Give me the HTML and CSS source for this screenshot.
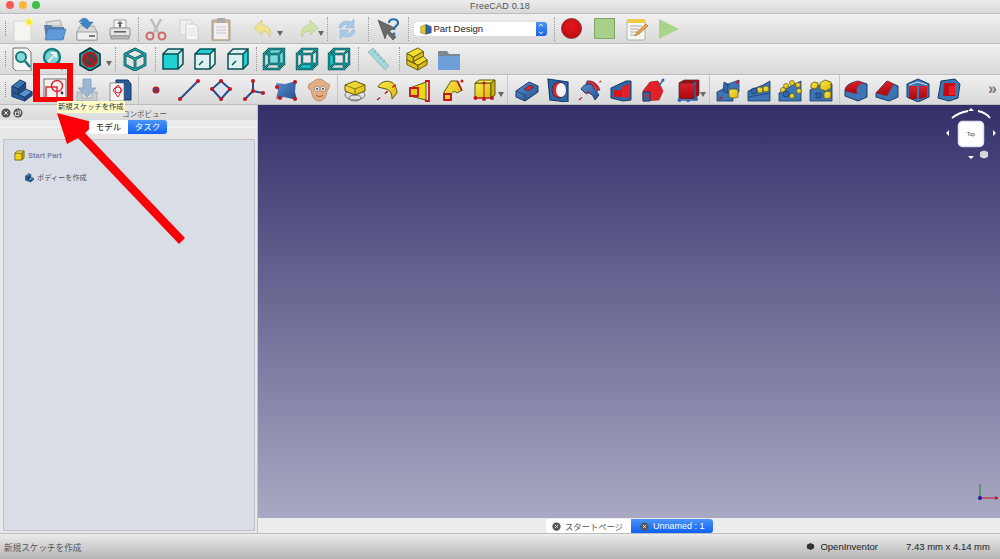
FILE: index.html
```html
<!DOCTYPE html>
<html lang="ja">
<head>
<meta charset="utf-8">
<title>FreeCAD 0.18</title>
<link rel="stylesheet" href="styles.css">
</head>
<body>
<svg class="defs" aria-hidden="true">
  <defs>
    <linearGradient id="red" x1="0" y1="0" x2="1" y2="1"><stop offset="0" stop-color="#f01a22"/><stop offset="1" stop-color="#a80810"/></linearGradient>
    <linearGradient id="yel" x1="0" y1="0" x2="1" y2="1"><stop offset="0" stop-color="#fbe94a"/><stop offset="1" stop-color="#d9b80c"/></linearGradient>
    <linearGradient id="blu" x1="0" y1="0" x2="1" y2="1"><stop offset="0" stop-color="#5b8fd0"/><stop offset="1" stop-color="#234f8c"/></linearGradient>
    <linearGradient id="vp" x1="0" y1="0" x2="0" y2="1"><stop offset="0" stop-color="#d92028"/><stop offset="1" stop-color="#a50a10"/></linearGradient>
    <path id="boxw" fill="none" d="M2 7h15v15H2zM7 2h15v15H7zM2 7l5-5M17 7l5-5M2 22l5-5M17 22l5-5"/>
    <path id="boxo" fill="none" d="M2 7h15v15H2zM2 7l5-5h15v15l-5 5M17 7l5-5"/>

    <symbol id="new" viewBox="0 0 24 24"><path d="M4 4h15l2 2v18H4z" fill="#f4f4f0" stroke="#d2d2ce" stroke-width=".8"/><circle cx="19" cy="5" r="4.500" fill="#fff176" opacity=".6"/><circle cx="19" cy="5" r="2.400" fill="#f6e92a"/></symbol>
    <symbol id="open" viewBox="0 0 24 24"><path d="M3 5l14-2 2 6H4z" fill="#ddd" stroke="#888" stroke-width=".6"/><path d="M1 8h7l2 2h11v12H3z" fill="#5b7fa6"/><path d="M5 12h18l-3 11H2z" fill="#5f9ad8" stroke="#3d6ea8" stroke-width=".6"/></symbol>
    <symbol id="save" viewBox="0 0 24 24"><path d="M2 15l3-6h14l3 6v8H2z" fill="#d8d8d8" stroke="#8a8a8a" stroke-width=".7"/><rect x="2" y="15" width="20" height="8" fill="#eee" stroke="#8a8a8a" stroke-width=".7"/><rect x="14" y="18" width="6" height="2" fill="#777"/><path d="M4 5c3-5 8-5 10 0h4l-6 7-7-6h3c-1-2-2-2-4-1z" fill="#3a86c8" stroke="#245c94" stroke-width=".5"/></symbol>
    <symbol id="print" viewBox="0 0 24 24"><path d="M6 3h12v8H6z" fill="#f4f4f4" stroke="#888" stroke-width=".7"/><path d="M9 7l3-3 3 3h-2v3h-2V7z" fill="#666"/><rect x="2" y="11" width="20" height="8" rx="1" fill="#e4e4e4" stroke="#777" stroke-width=".8"/><rect x="3" y="19" width="18" height="3" fill="#bbb" stroke="#777" stroke-width=".6"/><rect x="6" y="14" width="12" height="1.600" fill="#666"/></symbol>
    <symbol id="cut" viewBox="0 0 24 24"><path d="M7 2l8 15M17 2L9 17" stroke="#bdbdbd" stroke-width="2.400" fill="none"/><circle cx="6" cy="19" r="3.500" fill="none" stroke="#d06a6a" stroke-width="2"/><circle cx="18" cy="19" r="3.500" fill="none" stroke="#d06a6a" stroke-width="2"/></symbol>
    <symbol id="copy" viewBox="0 0 24 24"><path d="M3 3h12v15H3z" fill="#efefef" stroke="#d0d0d0"/><path d="M9 7h9l3 3v13H9z" fill="#f6f6f6" stroke="#ccc"/><path d="M11 12h8M11 15h8M11 18h8" stroke="#ddd"/></symbol>
    <symbol id="paste" viewBox="0 0 24 24"><rect x="3" y="3" width="18" height="21" rx="1" fill="#c9b596" stroke="#a4a096"/><rect x="5" y="6" width="14" height="16" fill="#efefef"/><rect x="8" y="1" width="8" height="5" rx="1" fill="#aaa"/><path d="M7 10h10M7 13h10M7 16h10" stroke="#c8c8c8"/></symbol>
    <symbol id="undo" viewBox="0 0 24 24"><path d="M10 3L2 11l8 7v-4c4 0 6 1 8 6 2-7-1-11-8-12z" fill="#f1e390" stroke="#cfc37c" stroke-width=".7"/></symbol>
    <symbol id="redo" viewBox="0 0 24 24"><path d="M14 3l8 8-8 7v-4c-4 0-6 1-8 6-2-7 1-11 8-12z" fill="#cfe3a8" stroke="#b4c98f" stroke-width=".7"/></symbol>
    <symbol id="refresh" viewBox="0 0 24 24"><path d="M4 11c0-5 6-9 12-6l3-3v9h-9l3-3c-3-1-5 0-6 3z" fill="#a9c8e6" stroke="#8db0d2" stroke-width=".5"/><path d="M20 13c0 5-6 9-12 6l-3 3v-9h9l-3 3c3 1 5 0 6-3z" fill="#a9c8e6" stroke="#8db0d2" stroke-width=".5"/></symbol>
    <symbol id="help" viewBox="0 0 24 24"><path d="M2 3l7 19 2-6 6 7 3-3-7-6 6-3z" fill="#6a6a6a" stroke="#333" stroke-width=".5"/><path d="M13 6c0-5 9-5 9 0 0 3-4 3-4 7" fill="none" stroke="#2d6aa8" stroke-width="2.200"/><circle cx="18" cy="17" r="1.400" fill="#2d6aa8"/></symbol>
    <symbol id="macro" viewBox="0 0 24 24"><rect x="2" y="3" width="18" height="20" rx="1" fill="#f6f6f0" stroke="#999" stroke-width=".7"/><rect x="2" y="2" width="18" height="4" fill="#eec94a"/><path d="M5 9h12M5 12h9M5 15h7M5 18h6" stroke="#aaa"/><path d="M10 19l2-4 9-8 2 2-9 8z" fill="#e8a23c" stroke="#8a5a1e" stroke-width=".5"/></symbol>

    <symbol id="fit" viewBox="0 0 24 24"><path d="M3 1h14l4 4v19H6l-3-3z" fill="#f4f4f4" stroke="#555" stroke-width=".8"/><circle cx="11" cy="10" r="5" fill="#8fd8d8" stroke="#107c80" stroke-width="2"/><path d="M15 14l5 6" stroke="#107c80" stroke-width="2.600"/></symbol>
    <symbol id="fitsel" viewBox="0 0 24 24"><circle cx="11" cy="10" r="8" fill="#7fd0d4" stroke="#107c80" stroke-width="2.400"/><path d="M17 16l5 6" stroke="#107c80" stroke-width="3"/><path d="M7 15l8-9M10 6h5v5" stroke="#f0f0f0" stroke-width="1.800" fill="none"/></symbol>
    <symbol id="nodraw" viewBox="0 0 24 24"><path d="M12 1l10 6v11l-10 6-10-6V7z" fill="#17a7a8" stroke="#07393c" stroke-width="1.600"/><circle cx="12" cy="12.500" r="7" fill="#444" stroke="#c5131c" stroke-width="2.200"/><path d="M7 8l10 9" stroke="#c5131c" stroke-width="2.200"/></symbol>
    <symbol id="cube0" viewBox="0 0 24 24"><path id="iso" fill="none" stroke="#0a4f52" stroke-width="2.800" d="M12 2l10 5v11l-10 5-10-5V7zM2 7l10 5 10-5M12 12v11"/><path fill="none" stroke="#20b8ba" stroke-width="1.100" d="M12 2l10 5v11l-10 5-10-5V7zM2 7l10 5 10-5M12 12v11"/></symbol>
    <symbol id="cubeF" viewBox="0 0 24 24"><path d="M2 7h15v15H2z" fill="#1dd0d2"/><path d="M2 7l5-5h15l-5 5zM17 7l5-5v15l-5 5z" fill="#bfe8e8"/><use href="#boxo" stroke="#0a4f52" stroke-width="1.500"/></symbol>
    <symbol id="cubeT" viewBox="0 0 24 24"><path d="M2 7l5-5h15l-5 5z" fill="#1dd0d2"/><path d="M2 7h15v15H2zM17 7l5-5v15l-5 5z" fill="#dcf0f0"/><use href="#boxo" stroke="#0a4f52" stroke-width="1.500"/><path d="M6 18l4-4" stroke="#0a4f52" stroke-width="1.500"/></symbol>
    <symbol id="cubeR" viewBox="0 0 24 24"><path d="M17 7l5-5v15l-5 5z" fill="#1dd0d2"/><path d="M2 7h15v15H2zM2 7l5-5h15l-5 5z" fill="#dcf0f0"/><use href="#boxo" stroke="#0a4f52" stroke-width="1.500"/><path d="M6 18l4-4" stroke="#0a4f52" stroke-width="1.500"/></symbol>
    <symbol id="cubeB" viewBox="0 0 24 24"><path d="M7 2h15v15H7z" fill="#7cdcdc"/><use href="#boxw" stroke="#0a4f52" stroke-width="2.400"/><use href="#boxw" stroke="#20b8ba" stroke-width=".9"/></symbol>
    <symbol id="cubeD" viewBox="0 0 24 24"><path d="M2 22l5-5h15l-5 5z" fill="#1dd0d2"/><use href="#boxw" stroke="#0a4f52" stroke-width="2.400"/><use href="#boxw" stroke="#20b8ba" stroke-width=".9"/></symbol>
    <symbol id="cubeL" viewBox="0 0 24 24"><path d="M2 7l5-5v15l-5 5z" fill="#1dd0d2"/><use href="#boxw" stroke="#0a4f52" stroke-width="2.400"/><use href="#boxw" stroke="#20b8ba" stroke-width=".9"/></symbol>
    <symbol id="ruler" viewBox="0 0 24 24"><path d="M7 1l16 18-4 4L2 5z" fill="#a3d8da" stroke="#7fb0b4" stroke-width=".7"/><path d="M8 6l2-2M11 9l2-2M14 12l2-2M17 15l2-2" stroke="#6c9ea4"/></symbol>
    <symbol id="part" viewBox="0 0 24 26"><g fill="#f4dc2a" stroke="#5c5210" stroke-width="1" stroke-linejoin="round"><path d="M1 7l12-6 6 4-11 6z"/><path d="M1 7l7 4v6l-7-3z" fill="#e0c41a"/><path d="M8 11l11-6v5L8 16z" fill="#d8bb14"/><path d="M8 16l11-6 4 4-10 6z"/><path d="M1 14l12 6v5L1 19z" fill="#e0c41a"/><path d="M13 20l10-6v5l-10 6z" fill="#d8bb14"/></g></symbol>
    <symbol id="ycube" viewBox="0 0 24 24"><path d="M2 7l6-5h14l-5 5z" fill="#fbe94a"/><path d="M2 7h15v15H2z" fill="#eed21c"/><path d="M17 7l5-5v15l-5 5z" fill="#c6a80e"/><use href="#boxo" stroke="#5c5210" stroke-width="1.600"/></symbol>
    <symbol id="folder" viewBox="0 0 24 24"><path d="M1 4h9l2 3h11v16H1z" fill="#7f8790"/><path d="M1 9h22v14H1z" fill="#6f9fd8"/></symbol>

    <symbol id="body" viewBox="0 0 24 26"><g fill="#3d74b4" stroke="#173a66" stroke-width="1" stroke-linejoin="round"><path d="M1 9l9-7 6 3-8 7z"/><path d="M1 9l7 3v6l-7-3z" fill="#2a5a98"/><path d="M8 12l8-7v7l-8 6z" fill="#1f4a84"/><path d="M8 18l8-6 7 3-8 6z" fill="#5b8fd0"/><path d="M1 15l14 6v4L1 20z" fill="#2a5a98"/><path d="M15 21l8-6v4l-8 6z" fill="#1f4a84"/></g></symbol>
    <symbol id="sketch" viewBox="0 0 24 24"><rect x="1" y="1" width="22" height="22" fill="#f2f2f2" stroke="#555" stroke-width=".8"/><rect x="3" y="9" width="11" height="13" fill="none" stroke="#e2202a" stroke-width="1.400"/><circle cx="14" cy="8" r="5.500" fill="none" stroke="#e2202a" stroke-width="1.400"/><circle cx="19" cy="15" r="1.400" fill="#333"/></symbol>
    <symbol id="import" viewBox="0 0 24 24"><path d="M2 14h5v6h10v-6h5v9H2z" fill="#c9ccd2" stroke="#9aa0a8" stroke-width=".7"/><path d="M8 1h8v9h5l-9 9-9-9h5z" fill="#9cb5d4" stroke="#7c98bc" stroke-width=".7"/></symbol>
    <symbol id="clone" viewBox="0 0 24 24"><path d="M8 2h12l3 4v16H8z" fill="#2a5a98" stroke="#173a66"/><path d="M2 5h14v18H2z" fill="#f4f4f4" stroke="#555" stroke-width=".6"/><path d="M5 12l5-5 4 5-4 7z" fill="none" stroke="#e2202a"/><circle cx="10" cy="12" r="3" fill="none" stroke="#e2202a"/></symbol>
    <symbol id="point" viewBox="0 0 24 24"><circle cx="12" cy="12" r="3.500" fill="#c8141c"/><circle cx="12" cy="12" r="2" fill="#2a4f9e" opacity=".8"/></symbol>
    <symbol id="line" viewBox="0 0 24 24"><path d="M3 21L21 3" stroke="#234f8c" stroke-width="2"/><circle cx="3" cy="21" r="2" fill="#c8141c"/><circle cx="21" cy="3" r="2" fill="#c8141c"/></symbol>
    <symbol id="plane" viewBox="0 0 24 24"><path d="M12 3l9 8-9 10-9-10z" fill="#dde4ee" stroke="#234f8c" stroke-width="2"/><g fill="#c8141c"><circle cx="12" cy="3" r="2"/><circle cx="21" cy="11" r="2"/><circle cx="12" cy="21" r="2"/><circle cx="3" cy="11" r="2"/></g></symbol>
    <symbol id="lcs" viewBox="0 0 24 24"><path d="M11 13V3M11 13l10 2M11 13L3 21" stroke="#234f8c" stroke-width="2"/><g fill="#c8141c"><circle cx="11" cy="3" r="2"/><circle cx="21" cy="15" r="2"/><circle cx="3" cy="21" r="2"/><circle cx="11" cy="13" r="2"/></g></symbol>
    <symbol id="shape" viewBox="0 0 24 24"><path d="M2 5l9 1 11-3-1 11 2 8-13-3-8 2 2-8z" fill="url(#blu)"/><g fill="#c8141c"><circle cx="3" cy="9" r="2"/><circle cx="21" cy="4" r="2"/><circle cx="21" cy="21" r="2"/><circle cx="6" cy="20" r="2"/></g></symbol>
    <symbol id="sheep" viewBox="0 0 24 24"><path d="M6 4c3-4 9-4 12 0l5 3-2 5-1 0c0 6-3 11-8 11S5 18 4 12L1 10l1-4z" fill="#e3ad84" stroke="#b07d58" stroke-width=".7"/><circle cx="10" cy="11" r="2.500" fill="#fff" stroke="#555" stroke-width=".5"/><circle cx="16" cy="11" r="2.500" fill="#fff" stroke="#555" stroke-width=".5"/><circle cx="10" cy="11" r="1" fill="#333"/><circle cx="16" cy="11" r="1" fill="#333"/><path d="M9 17c2 2 5 2 7 0" stroke="#8a5a38" fill="none"/></symbol>

    <symbol id="pad" viewBox="0 0 24 24"><ellipse cx="12" cy="17" rx="10" ry="5" fill="none" stroke="#777"/><ellipse cx="12" cy="20" rx="6" ry="3" fill="none" stroke="#777"/><path d="M2 7l10-4 10 4v6l-10 4-10-4z" fill="url(#yel)" stroke="#5e5410"/><path d="M2 7l10 4 10-4M12 11v6" fill="none" stroke="#5e5410" stroke-width=".7"/></symbol>
    <symbol id="rev" viewBox="0 0 24 24"><path d="M2 9c2-5 9-7 13-5 3 1 6 6 6 11l-5 6c0-6-2-9-6-10-3-1-5-1-8-2z" fill="url(#yel)" stroke="#5e5410"/><path d="M1 22L23 4" stroke="#c8141c" stroke-width="1.400" stroke-dasharray="4 6"/></symbol>
    <symbol id="loft" viewBox="0 0 24 24"><path d="M2 10l16-6v18l-16-4z" fill="#f0d818" stroke="#5e5410"/><path d="M2 10h8v8H2z" fill="#e8c818" stroke="#c8141c" stroke-width="1.800"/><path d="M17 3h4v20h-4" fill="none" stroke="#c8141c" stroke-width="1.800"/></symbol>
    <symbol id="sweep" viewBox="0 0 24 24"><path d="M3 14l7-11h7l4 9-5 3c-2-2-4-2-6 1v6H3z" fill="url(#yel)" stroke="#5e5410"/><path d="M3 16h7v6H3z" fill="none" stroke="#c8141c" stroke-width="1.800"/><path d="M16 3l5 10" stroke="#c8141c" stroke-width="1.500"/><circle cx="21" cy="3" r="1.500" fill="#c8141c"/></symbol>
    <symbol id="prim" viewBox="0 0 24 24"><path d="M2 5h16v15H2z" fill="url(#yel)" stroke="#5e5410"/><path d="M2 5l4-3h16l-4 3z" fill="#fbe94a" stroke="#5e5410"/><path d="M18 5l4-3v15l-4 3z" fill="#cdb016" stroke="#5e5410"/><path d="M11 5v15M2 20h16" stroke="#c8141c"/><g fill="#c8141c"><circle cx="2.500" cy="20" r="2"/><circle cx="11" cy="21" r="2"/><circle cx="19" cy="20" r="2"/><circle cx="11" cy="5" r="1.500"/></g></symbol>

    <symbol id="pocket" viewBox="0 0 24 24"><path d="M1 13l13-9 9 4v6l-13 9-9-4z" fill="url(#blu)" stroke="#173a66"/><path d="M9 11l6-4 4 2-6 4z" fill="#e2202a" stroke="#173a66" stroke-width=".7"/><path d="M1 13l9 4v6" fill="none" stroke="#173a66" stroke-width=".8"/></symbol>
    <symbol id="hole" viewBox="0 0 24 24"><path d="M2 1l20 3v20L4 22z" fill="#2f66a8" stroke="#173a66" stroke-width="1.200"/><ellipse cx="13" cy="12" rx="7" ry="8" fill="#e2202a" stroke="#173a66"/><ellipse cx="15" cy="12" rx="5" ry="7" fill="#f4f4f4"/></symbol>
    <symbol id="groove" viewBox="0 0 24 24"><path d="M3 11c3-5 8-6 11-4l7 10-4 5c-2-5-5-8-10-7z" fill="url(#blu)" stroke="#173a66"/><path d="M8 6c5-2 9 2 11 7l3-1c-2-6-7-10-13-9z" fill="#e2202a" stroke="#173a66" stroke-width=".6"/><path d="M1 22L23 3" stroke="#c8141c" stroke-width="1.200" stroke-dasharray="4 5"/></symbol>
    <symbol id="sloft" viewBox="0 0 24 24"><path d="M2 10l15-7h5v19l-8 1-12-3z" fill="#2f66a8" stroke="#173a66"/><path d="M5 12h8v7H5z" fill="#d5141c"/><path d="M13 9l8-4v15l-8-1z" fill="#e2202a"/></symbol>
    <symbol id="ssweep" viewBox="0 0 24 24"><path d="M2 13l7-9 8-1 5 10-4 9-16 1z" fill="#e2202a" stroke="#8a0c12" stroke-width=".6"/><path d="M2 14h7v9H2z" fill="#2f66a8" stroke="#173a66"/><rect x="4" y="16" width="3" height="4" fill="#e2202a"/><path d="M18 8l4-6" stroke="#2f66a8" stroke-width="1.400"/><circle cx="22" cy="2" r="1.500" fill="#2f66a8"/></symbol>
    <symbol id="sprim" viewBox="0 0 24 24"><path d="M2 5l5-3h15v15l-4 3z" fill="#a80810" stroke="#333" stroke-width=".7"/><rect x="2" y="5" width="16" height="16" fill="url(#vp)" stroke="#333" stroke-width=".7"/><path d="M18 4v17M2 22h16" stroke="#2f66a8" stroke-width="1.400"/><g fill="#2f66a8"><circle cx="2.500" cy="22" r="2"/><circle cx="11" cy="23" r="1.500"/><circle cx="19" cy="21" r="2"/><circle cx="18" cy="5" r="1.500"/></g></symbol>

    <symbol id="mirror" viewBox="0 0 24 24"><path d="M1 14l6-3 10 4v8L1 23z" fill="#3d74b4" stroke="#173a66" stroke-width=".8"/><path d="M8 4l4 2v9l-5-2z" fill="#2f66a8" stroke="#173a66" stroke-width=".7"/><path d="M12 6l11-4v12l-9 3z" fill="#3d74b4" stroke="#173a66" stroke-width=".7"/><path d="M13 12a6 3 0 0 1 9 0v7a6 3 0 0 1-9 0z" fill="url(#yel)" stroke="#5e5410" stroke-width=".7"/><path d="M3 21l3-2M20 5l3-2" stroke="#c8141c" stroke-width="1.600"/></symbol>
    <symbol id="linear" viewBox="0 0 24 24"><path d="M1 13l15-6 7-4v20H1z" fill="#3d74b4" stroke="#173a66" stroke-width=".8"/><path d="M1 19l22-4" stroke="#173a66" stroke-width=".7"/><g fill="url(#yel)" stroke="#5e5410" stroke-width=".7"><circle cx="13" cy="12" r="3"/><circle cx="19" cy="11" r="3"/></g><circle cx="7" cy="13" r="3" fill="#2f66a8" stroke="#173a66" stroke-width=".7"/></symbol>
    <symbol id="polar" viewBox="0 0 24 24"><path d="M1 15l14-8 8-4v20H1z" fill="#3d74b4" stroke="#173a66" stroke-width=".8"/><g fill="url(#yel)" stroke="#5e5410" stroke-width=".7"><circle cx="8" cy="8" r="2.500"/><circle cx="14" cy="5" r="2.500"/><circle cx="20" cy="7" r="2.500"/><circle cx="21" cy="13" r="2.500"/><circle cx="14" cy="18" r="2.500"/><circle cx="5" cy="12" r="2.500"/></g><circle cx="8" cy="16" r="3" fill="#2f66a8" stroke="#173a66" stroke-width=".7"/></symbol>
    <symbol id="multi" viewBox="0 0 24 24"><path d="M1 12l12-6 10 0v17H1z" fill="#3d74b4" stroke="#173a66" stroke-width=".8"/><g fill="url(#yel)" stroke="#5e5410" stroke-width=".8"><path d="M11 5l5-3 6 2v6l-5 3-6-2z"/><path d="M2 6l3-2 4 1v4l-3 2-4-1z"/><path d="M15 15l3-2 4 1v5l-3 2-4-1z"/></g><rect x="7" y="15" width="5" height="5" fill="#2f66a8" stroke="#173a66" stroke-width=".7"/></symbol>
    <symbol id="fillet" viewBox="0 0 24 24"><path d="M1 12c1-5 5-7 13-9l9 3v13l-9 4-13-5z" fill="#3d74b4" stroke="#173a66"/><path d="M1 13c1-5 4-8 13-10l6 2c-7 2-8 6-7 11z" fill="url(#vp)"/></symbol>
    <symbol id="chamfer" viewBox="0 0 24 24"><path d="M1 15L12 3l11 5v11l-9 4-13-4z" fill="#3d74b4" stroke="#173a66"/><path d="M1 15L12 3l7 3-7 12z" fill="url(#vp)"/></symbol>
    <symbol id="draft" viewBox="0 0 24 24"><path d="M12 1l11 5v13l-11 5-11-5V6z" fill="#3d74b4" stroke="#173a66"/><path d="M3 8h8v13H3zM13 8h8v11l-8 2z" fill="url(#vp)"/><path d="M3 7l9-3 9 3" fill="none" stroke="#cfe0f2"/></symbol>
    <symbol id="thick" viewBox="0 0 24 24"><path d="M4 3l14-2 5 5-2 14-9 3-11-3z" fill="#3d74b4" stroke="#173a66"/><path d="M7 5h11v13H6z" fill="#c00c14"/><path d="M12 8h6v9h-6z" fill="#ee1c24"/></symbol>

    <symbol id="pd" viewBox="0 0 16 16"><path d="M1 5l7-3v13l-7-2z" fill="#e8c818" stroke="#5e5410" stroke-width=".6"/><path d="M8 2l7 3v8l-7 2z" fill="#2f66a8" stroke="#173a66" stroke-width=".6"/></symbol>
    <symbol id="cx" viewBox="0 0 12 12"><circle cx="6" cy="6" r="5.500" fill="#555"/><path d="M3.800 3.800l4.400 4.400M8.200 3.800L3.800 8.200" stroke="#eee" stroke-width="1.200"/></symbol>
    <symbol id="cf" viewBox="0 0 12 12"><circle cx="6" cy="6" r="5.500" fill="#555"/><rect x="3" y="5" width="4" height="4" fill="none" stroke="#eee"/><path d="M5 3.500h4v4" fill="none" stroke="#eee"/></symbol>
  </defs>
</svg>

<header class="titlebar">
  <div class="lights"><span class="light red"></span><span class="light amber"></span><span class="light green"></span></div>
  <div class="title">FreeCAD 0.18</div>
</header>

<section class="row row1">
  <span class="handle"></span>
  <span class="b"><svg class="ic"><use href="#new"/></svg></span>
  <span class="b"><svg class="ic"><use href="#open"/></svg></span>
  <span class="b"><svg class="ic"><use href="#save"/></svg></span>
  <span class="b"><svg class="ic"><use href="#print"/></svg></span>
  <span class="sep"></span>
  <span class="b"><svg class="ic"><use href="#cut"/></svg></span>
  <span class="b"><svg class="ic"><use href="#copy"/></svg></span>
  <span class="b"><svg class="ic"><use href="#paste"/></svg></span>
  <span class="b drop undo-cell"><svg class="ic"><use href="#undo"/></svg><i class="caret"></i></span>
  <span class="b drop redo-cell"><svg class="ic"><use href="#redo"/></svg><i class="caret"></i></span>
  <span class="sep"></span>
  <span class="b wide38"><svg class="ic"><use href="#refresh"/></svg></span>
  <span class="sep"></span>
  <span class="b wide36"><svg class="ic"><use href="#help"/></svg></span>
  <span class="sep"></span>
  <div class="combo"><svg class="combo-ic"><use href="#pd"/></svg><span class="combo-t">Part Design</span><span class="combo-btn"><i class="up"></i><i class="down"></i></span></div>
  <span class="sep sep-combo"></span>
  <span class="b"><span class="rec"></span></span>
  <span class="b"><span class="stop"></span></span>
  <span class="b"><svg class="ic"><use href="#macro"/></svg></span>
  <span class="b"><span class="play"></span></span>
</section>

<section class="row row2">
  <span class="handle"></span>
  <span class="b"><svg class="ic"><use href="#fit"/></svg></span>
  <span class="b narrow"><svg class="ic"><use href="#fitsel"/></svg></span>
  <span class="b drop draw-cell"><svg class="ic"><use href="#nodraw"/></svg><i class="caret"></i></span>
  <span class="sep"></span>
  <span class="b wide36"><svg class="ic"><use href="#cube0"/></svg></span>
  <span class="sep"></span>
  <span class="b"><svg class="ic"><use href="#cubeF"/></svg></span>
  <span class="b"><svg class="ic"><use href="#cubeT"/></svg></span>
  <span class="b"><svg class="ic"><use href="#cubeR"/></svg></span>
  <span class="sep"></span>
  <span class="b"><svg class="ic"><use href="#cubeB"/></svg></span>
  <span class="b"><svg class="ic"><use href="#cubeD"/></svg></span>
  <span class="b"><svg class="ic"><use href="#cubeL"/></svg></span>
  <span class="sep"></span>
  <span class="b wide38"><svg class="ic"><use href="#ruler"/></svg></span>
  <span class="sep"></span>
  <span class="b"><svg class="ic"><use href="#part"/></svg></span>
  <span class="b tight2"><svg class="ic"><use href="#folder"/></svg></span>
</section>

<section class="row row3">
  <span class="handle"></span>
  <span class="b"><svg class="ic"><use href="#body"/></svg></span>
  <span class="b"><svg class="ic"><use href="#sketch"/></svg></span>
  <span class="b"><svg class="ic"><use href="#import"/></svg></span>
  <span class="b"><svg class="ic"><use href="#clone"/></svg></span>
  <span class="sep"></span>
  <span class="b"><svg class="ic"><use href="#point"/></svg></span>
  <span class="b"><svg class="ic"><use href="#line"/></svg></span>
  <span class="b"><svg class="ic"><use href="#plane"/></svg></span>
  <span class="b"><svg class="ic"><use href="#lcs"/></svg></span>
  <span class="b"><svg class="ic"><use href="#shape"/></svg></span>
  <span class="b"><svg class="ic"><use href="#sheep"/></svg></span>
  <span class="sep"></span>
  <span class="b"><svg class="ic"><use href="#pad"/></svg></span>
  <span class="b"><svg class="ic"><use href="#rev"/></svg></span>
  <span class="b"><svg class="ic"><use href="#loft"/></svg></span>
  <span class="b"><svg class="ic"><use href="#sweep"/></svg></span>
  <span class="b drop prim-cell"><svg class="ic"><use href="#prim"/></svg><i class="caret"></i></span>
  <span class="sep"></span>
  <span class="b tight lead"><svg class="ic"><use href="#pocket"/></svg></span>
  <span class="b tight"><svg class="ic"><use href="#hole"/></svg></span>
  <span class="b tight"><svg class="ic"><use href="#groove"/></svg></span>
  <span class="b tight"><svg class="ic"><use href="#sloft"/></svg></span>
  <span class="b tight"><svg class="ic"><use href="#ssweep"/></svg></span>
  <span class="b drop sprim-cell"><svg class="ic"><use href="#sprim"/></svg><i class="caret"></i></span>
  <span class="sep"></span>
  <span class="b tight2 lead"><svg class="ic"><use href="#mirror"/></svg></span>
  <span class="b tight2"><svg class="ic"><use href="#linear"/></svg></span>
  <span class="b tight2"><svg class="ic"><use href="#polar"/></svg></span>
  <span class="b tight2"><svg class="ic"><use href="#multi"/></svg></span>
  <span class="sep"></span>
  <span class="b tight2"><svg class="ic"><use href="#fillet"/></svg></span>
  <span class="b tight2"><svg class="ic"><use href="#chamfer"/></svg></span>
  <span class="b tight2"><svg class="ic"><use href="#draft"/></svg></span>
  <span class="b tight2"><svg class="ic"><use href="#thick"/></svg></span>
  <span class="more">»</span>
</section>

<main class="main">
  <aside class="panel">
    <div class="panel-head">
      <svg class="pbtn"><use href="#cx"/></svg>
      <svg class="pbtn"><use href="#cf"/></svg>
      <span class="panel-title">コンポビュー</span>
    </div>
    <div class="seg"><span class="seg-a">モデル</span><span class="seg-b">タスク</span></div>
    <div class="frame">
      <div class="pane">
        <div class="task-head"><svg class="task-ic"><use href="#ycube"/></svg><span>Start Part</span></div>
        <div class="task-item"><svg class="task-ic2"><use href="#body"/></svg><span>ボディーを作成</span></div>
      </div>
    </div>
  </aside>
  <div class="view">
    <div class="viewport">
      <svg class="navcube" viewBox="0 0 60 62">
        <path d="M12 13C17 9 22 7 28 6M38 6c5 1 9 3 12 7" fill="none" stroke="#fff" stroke-width="1.800"/>
        <path d="M31 3l3 3h-6zM6 28l3-3v6zM56 28l-3-3v6zM31 54l-3-3h6z" fill="#fff"/>
        <rect x="18.500" y="16.500" width="25" height="25" rx="4" fill="#fff" stroke="#dfe2f0" stroke-width="1.500"/>
        <text x="31" y="31" class="navtxt" text-anchor="middle">Top</text>
        <path d="M40 47l4-1.500 4 1.500v5l-4 1.500-4-1.500z" fill="#d8d8d8"/>
      </svg>
      <svg class="axes" viewBox="0 0 24 20">
        <path d="M4 16V2" stroke="#1c8a2a"/>
        <path d="M4 16h15" stroke="#c8141c"/>
        <path d="M19 14l4 2-4 2z" fill="#c8141c"/>
        <circle cx="4" cy="16" r="2" fill="#1c1c9a"/>
      </svg>
    </div>
    <div class="doc-tabs">
      <span class="dt dt-a"><svg class="dt-x"><use href="#cx"/></svg>スタートページ</span>
      <span class="dt dt-b"><svg class="dt-x"><use href="#cx"/></svg>Unnamed : 1</span>
    </div>
  </div>
</main>

<footer class="status">
  <span class="status-l">新規スケッチを作成</span>
  <span class="status-nav"><svg class="status-ic" viewBox="0 0 10 10"><path d="M5 1l4 2v4L5 9 1 7V3z" fill="#333"/></svg>OpenInventor</span>
  <span class="status-size">7.43 mm x 4.14 mm</span>
</footer>

<div class="callout"></div>
<div class="tooltip">新規スケッチを作成</div>
<svg class="arrow" viewBox="0 0 200 150">
  <path d="M57 13L96 23 85 33 185 138 179 144 78 38 67 44z" fill="#fb0006"/>
</svg>
</body>
</html>
```
FILE: styles.css
```css
* { box-sizing: border-box; }
html, body { margin: 0; padding: 0; height: 559px; width: 1000px; overflow: hidden; }
body {
  position: relative;
  display: flex;
  flex-direction: column;
  font-family: "Liberation Sans", "Noto Sans CJK JP", sans-serif;
  background: #ececec;
  color: #222;
}
.defs { position: absolute; width: 0; height: 0; }

.titlebar { height: 13px; flex: none; display: flex; align-items: center; justify-content: center; position: relative; background: linear-gradient(#ececec, #d8d8d8); }
.lights { position: absolute; left: 6px; top: 1px; display: flex; gap: 5px; }
.light { width: 8px; height: 8px; border-radius: 50%; }
.red { background: #f25c55; }
.amber { background: #f6b73c; }
.green { background: #3dc04a; }
.title { font-size: 9px; color: #555; letter-spacing: .2px; margin-top: -1px; }

.row { flex: none; display: flex; align-items: center; padding-left: 6px; position: relative; background: linear-gradient(#f0f0f0, #d9d9d9); border-top: 1px solid #bdbdbd; }
.row1 { height: 30px; }
.row2 { height: 31px; }
.row3 { height: 31px; border-bottom: 1px solid #bdbdbd; }
.handle { position: absolute; left: 5px; top: 7px; bottom: 7px; border-left: 1px dotted #8c8c8c; }

.b { flex: none; width: 32.5px; height: 26px; display: flex; align-items: center; justify-content: center; position: relative; }
.ic { width: 24px; height: 24px; display: block; overflow: visible; }
.narrow { width: 28px; }
.wide38 { width: 37px; }
.wide36 { width: 36px; }
.tight { width: 31.5px; }
.tight2 { width: 31px; }
.lead { margin-left: 2px; }
.drop { justify-content: flex-start; }
.undo-cell { width: 46px; padding-left: 14px; }
.redo-cell { width: 41px; padding-left: 12px; }
.draw-cell { width: 46px; padding-left: 11px; }
.prim-cell { width: 36px; padding-left: 4px; }
.sprim-cell { width: 38px; padding-left: 8px; }
.caret { position: absolute; right: 1px; top: 15px; border-left: 3.500px solid transparent; border-right: 3.500px solid transparent; border-top: 5px solid #666; }
.sep { flex: none; width: 1px; height: 24px; margin: 0 1px 0 2px; border-left: 1px dotted #999; }
.row3 .sep { height: 29px; border-left: 1px solid #c6c6c6; }
.sep-combo { margin-left: 7px; }

.combo { flex: none; width: 133px; height: 14px; margin-left: 4px; display: flex; align-items: center; background: #fff; border-radius: 3px; overflow: hidden; box-shadow: 0 0 1px #aaa; }
.combo-ic { width: 12px; height: 12px; margin: 0 2px 0 6px; }
.combo-t { font-size: 9.500px; color: #222; flex: 1; }
.combo-btn { width: 11px; height: 100%; background: linear-gradient(#4a94f5, #1a62e0); display: flex; flex-direction: column; align-items: center; justify-content: center; gap: 2px; }
.up, .down { display: block; width: 4px; height: 4px; border: 1px solid #fff; transform: rotate(45deg) scale(.8); }
.up { border-right: none; border-bottom: none; }
.down { border-left: none; border-top: none; }

.rec { width: 21px; height: 21px; border-radius: 50%; background: radial-gradient(circle at 50% 35%, #e8161e, #b00a10); border: 1px solid #8d2a2a; }
.stop { width: 21px; height: 21px; background: #a8d088; border: 1px solid #80a46a; }
.play { width: 0; height: 0; border-left: 20px solid #a9d48a; border-top: 10.500px solid transparent; border-bottom: 10.500px solid transparent; }

.more { position: absolute; right: 3px; top: 5px; font-size: 16px; line-height: 18px; color: #777; font-weight: bold; }

.main { flex: 1; min-height: 0; display: flex; }
.panel { width: 258px; flex: none; display: flex; flex-direction: column; background: #ececec; border-right: 1px solid #c4c4c4; }
.panel-head { height: 15px; flex: none; display: flex; align-items: center; gap: 2px; padding-left: 1px; position: relative; background: linear-gradient(#e6e6e6, #dcdcdc); }
.pbtn { width: 10px; height: 10px; }
.panel-title { position: absolute; left: 122px; top: 3px; font-size: 7.500px; color: #555; }
.seg { flex: none; height: 14px; align-self: flex-start; margin-left: 89px; display: flex; position: relative; z-index: 1; font-size: 8.500px; line-height: 14px; border-radius: 3px; overflow: hidden; box-shadow: 0 0 1px #bbb; }
.seg-a { width: 39px; text-align: center; background: #fff; color: #111; }
.seg-b { width: 39px; text-align: center; background: linear-gradient(#4a94f8, #0f62f2); color: #fff; }
.frame { flex: 1; margin-top: -7px; padding: 11px 2px 2px 3px; background: #e8e8e8; border-top: 1px solid #f4f4f4; display: flex; }
.pane { flex: 1; background: #d9dee6; border: 1px solid #c2c2c2; padding-top: 9px; }
.task-head { display: flex; align-items: center; height: 12px; padding-left: 10px; font-size: 7.500px; font-weight: bold; color: #7d85a8; gap: 3px; }
.task-ic { width: 11px; height: 11px; }
.task-item { display: flex; align-items: center; height: 12px; margin-top: 10px; padding-left: 21px; font-size: 7.200px; color: #555; gap: 3px; }
.task-ic2 { width: 9px; height: 11px; }

.view { flex: 1; min-width: 0; display: flex; flex-direction: column; }
.viewport { flex: 1; position: relative; background: linear-gradient(#33306a, #a9a9c3); }
.navcube { position: absolute; right: 0; top: 0; width: 60px; height: 62px; }
.navtxt { font: 5px "Liberation Sans", sans-serif; fill: #444; }
.axes { position: absolute; right: 0; bottom: 16px; width: 24px; height: 20px; }
.doc-tabs { flex: none; height: 15px; display: flex; justify-content: center; padding-left: 1px; align-items: flex-end; background: #ececec; }
.dt { height: 14px; display: flex; align-items: center; font-size: 9px; gap: 4px; }
.dt-a { width: 85px; padding-left: 6px; background: #fff; color: #555; border-radius: 3px 0 0 3px; font-size: 8.300px; }
.dt-b { width: 82px; padding-left: 9px; background: linear-gradient(#4a94f8, #0f62f2); color: #fff; border-radius: 0 3px 3px 0; }
.dt-x { width: 9px; height: 9px; flex: none; }

.status { height: 26px; flex: none; display: flex; align-items: center; padding-left: 4px; font-size: 9.500px; background: linear-gradient(#ececec, #b4b4b4); border-top: 1px solid #bdbdbd; color: #444; }
.status-l { flex: 1; color: #555; font-size: 8.600px; }
.status-nav { display: flex; align-items: center; gap: 5px; color: #222; }
.status-ic { width: 9px; height: 9px; }
.status-size { width: 94px; margin-left: 28px; color: #222; white-space: nowrap; }

.callout { position: absolute; left: 33px; top: 63px; width: 40px; height: 39px; border: solid #f90006; border-width: 6px 6px 5px 7px; }
.tooltip { position: absolute; left: 57px; top: 101px; width: 68px; height: 12px; padding-left: 1px; font-size: 7.300px; line-height: 12px; white-space: nowrap; background: #fdfdc8; color: #333; }
.arrow { position: absolute; left: 0; top: 100px; width: 200px; height: 150px; overflow: visible; }
```
